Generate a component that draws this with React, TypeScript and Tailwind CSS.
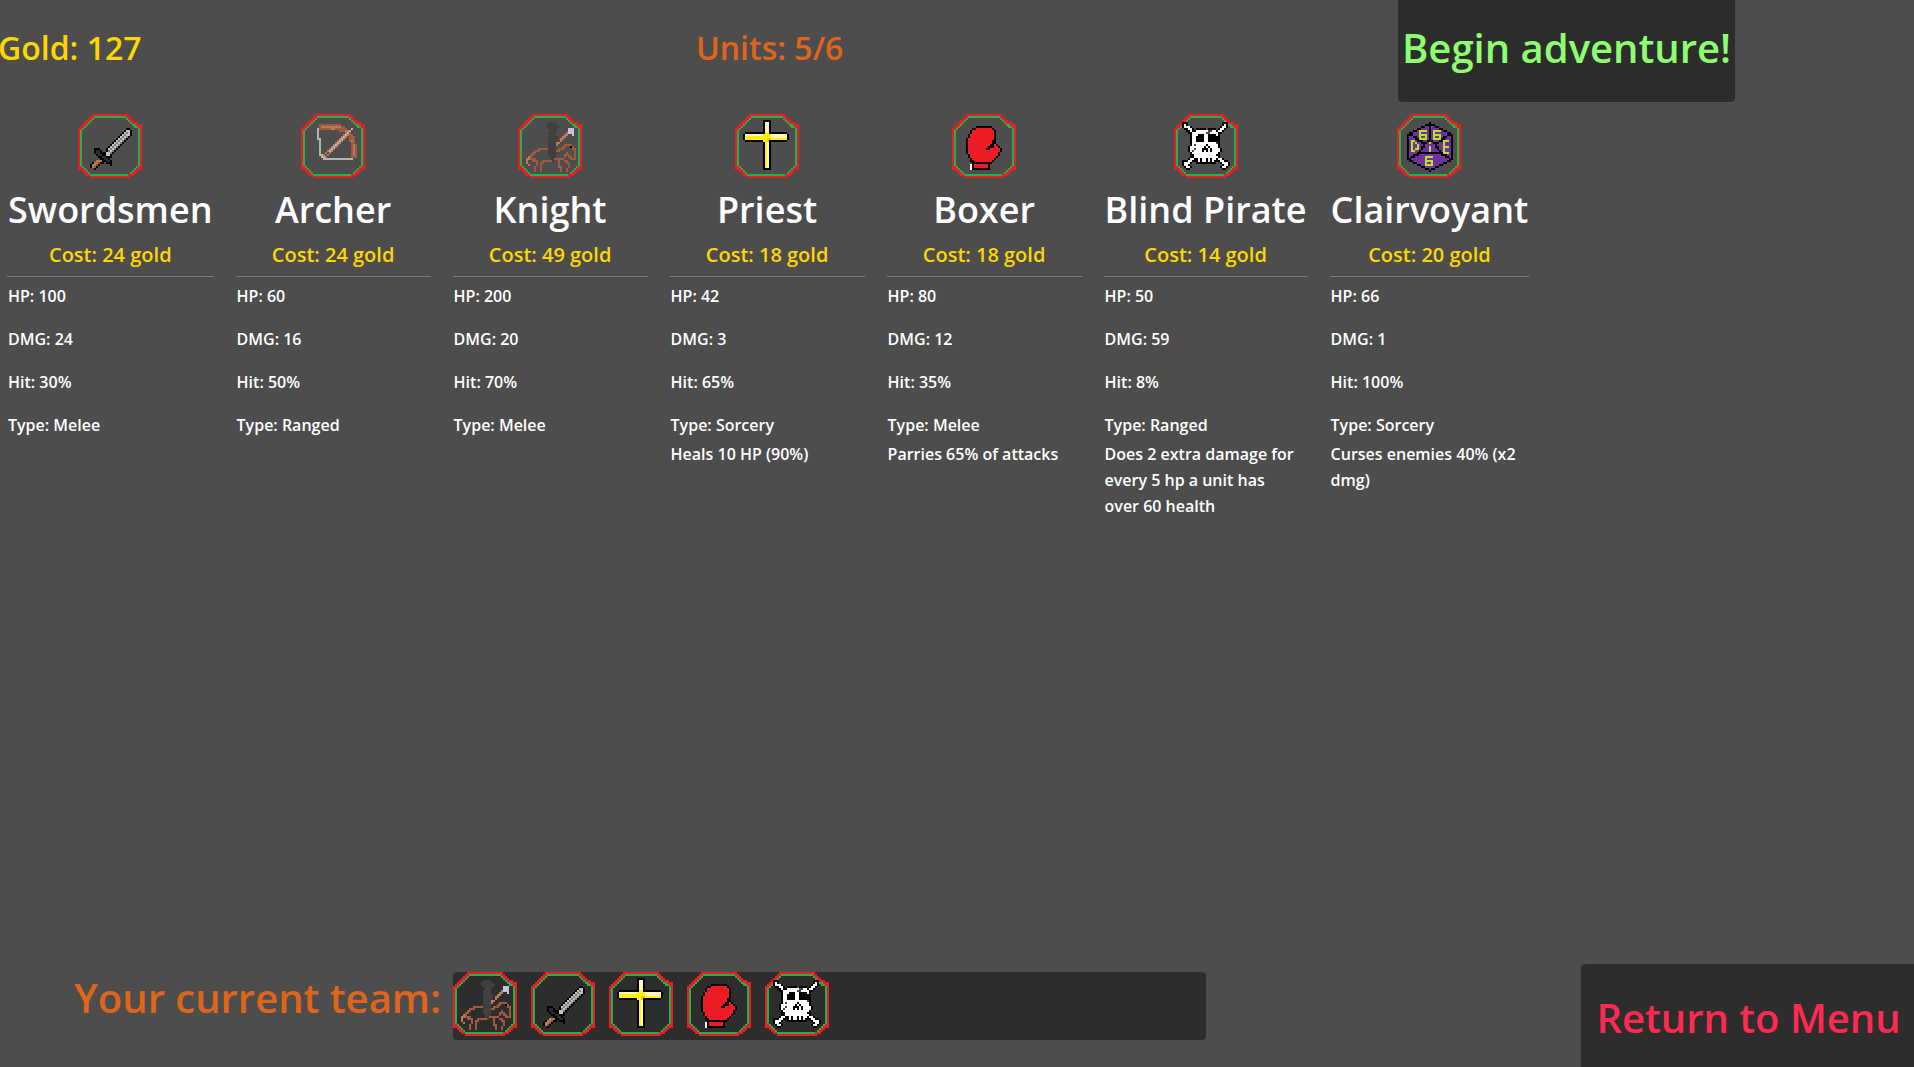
type Layer = [color: string, runs: string];

const FRAME: Layer[] = [
  [
    "#ed1c24",
    "0:7-24 1:6-7,24-25 2:5-6,25-26 3:4-5,26-27 4:3-4,27-29 5:2-3,29-31 6:1-2,30-31 7:0-1,31 8:0,31 9:0,31 10:0,31 11:0,31 12:0,31 13:0,31 14:0,31 15:0,31 16:0,31 17:0,31 18:0,31 19:0,31 20:0,31 21:0,31 22:0,31 23:0,31 24:0,31 25:0,31 26:0-1,30-31 27:0-2,29-31 28:2-3,28-29 29:3-4,27-28 30:4-5,25-27 31:6-25",
  ],
  [
    "#22b14c",
    "1:8-23 2:7,24 3:6,25 4:5,26 5:4,27-28 6:3,28-29 7:2,30 8:1,30 9:1,30 10:1,30 11:1,30 12:1,30 13:1,30 14:1,30 15:1,30 16:1,30 17:1,30 18:1,30 19:1,30 20:1,30 21:1,30 22:1,30 23:1,30 24:1,30 25:1,30 26:2,29 27:3,28 28:4,27 29:5,26 30:6-24",
  ],
];

const SPRITES: Record<string, Layer[]> = {
  sword: [
    [
      "#000000",
      "7:24-25 8:23,26 9:22,26 10:21,26 11:20,25 12:19,24 13:18,23 14:17,22 15:16,21 16:15,20 17:8-10,14,19 18:8,11,14,18 19:8,11-13,17 20:9,12-13,16 21:10-11,14-16 22:11-12,15 23:12-13,16 24:7,11-12,14-16 25:6,10,16 26:6,9 27:8",
    ],
    ["#c3c3c3", "8:24-25 9:23-25 10:22-25 11:21-24 12:20-23 13:19-22 14:18-21 15:17-20 16:16-19 17:15-18 18:15-17 19:14-16 20:14-15"],
    ["#7f7f7f", "9:24 10:23 11:22,24 12:21,23 13:20,22 14:19,21 15:18,20 16:17,19 17:16,18 18:15,17 19:16"],
    ["#2b2b2b", "18:9-10 19:9-10 20:10-11 21:12-13 22:13-14 23:14-15"],
    ["#b97a57", "23:9-11 24:8-10 25:7-9 26:7-8"],
    ["#8a553a", "24:10 25:9 26:8"],
  ],
  bow: [
    [
      "#a0593a",
      "5:9-19 6:9,20-21 7:9-14,17-22 8:19-24 9:22-24 10:23-25 11:24-26 12:24-26 13:24-26 14:25-26 15:25,27 16:25,27 17:25,27 18:25,27 19:25,27 20:25,27 21:25-27",
    ],
    [
      "#b97a57",
      "6:10-19 7:15-16 8:22-23 9:22-23 10:21,23 11:20,22 12:19,21 13:18,20,25 14:17,19 15:16,18,26 16:15,17,26 17:14,16,26 18:13,15,26 19:12,14,26 20:11,13,26 21:12",
    ],
    [
      "#b4b4b4",
      "7:8,25 8:8,24 9:8,23 10:8,22 11:8,21 12:8-9,20 13:9,19 14:9,18 15:9,17 16:9,16 17:9,15 18:9,14 19:9 20:9-10 21:10-11 22:11-25",
    ],
  ],
  knight: [
    [
      "#404040",
      "4:15-18 5:14-19 6:14-20 7:15-19 8:16-18 9:15-18 10:15-18 11:15-19 12:15-19 13:15-19 14:15-19 15:15-18 16:15-18 17:15-18 18:15-18 19:15-18 20:15-18 21:16-18 22:16-18 23:16-17",
    ],
    ["#c8bfe7", "7:25-27 8:25-27 9:25-27 10:27"],
    ["#b97a57", "9:24 10:23-24 11:22-23 12:21-22 13:21 14:19-20 15:19 21:5 22:4-5 23:4 24:4 25:5"],
    [
      "#a0593a",
      "15:23-26 16:22-23,27 17:10-14,20-22,27-28 18:8-10,19-20,28 19:7-8,24,28 20:6-7,23-25,28 21:6,23,25-26,28 22:6-8,18-22,26-28 23:7-9,12-16,20,23-24 24:9,11-12,20,24-25 25:9,11,20,25 26:8,11,20-21,25 27:8,11,21,24 28:8,11,21,24",
    ],
    ["#000000", "16:26"],
  ],
  cross: [
    [
      "#000000",
      "3:14-17 4:14,17 5:14,17 6:14,17 7:14,17 8:14,17 9:5-14,17-25 10:4,26 11:4,26 12:4,26 13:5-14,17-25 14:14,17 15:14,17 16:14,17 17:14,17 18:14,17 19:14,17 20:14,17 21:14,17 22:14,17 23:14,17 24:14,17 25:14,17 26:14,17 27:14-17",
    ],
    [
      "#fff6bf",
      "4:15-16 5:15-16 6:15-16 7:15-16 8:15-16 10:5-13,18-25 11:18-25 14:16 15:16 16:16 17:16 18:16 19:16 20:16 21:16 22:16 23:16 24:16 25:16 26:16",
    ],
    [
      "#fff200",
      "9:15-16 10:14-17 11:5-17 12:5-25 13:14-16 14:15 15:15 16:15 17:15 18:15 19:15 20:15 21:15 22:15 23:15 24:15 25:15 26:15",
    ],
    ["#e6cf00", "12:16-17 13:16"],
  ],
  glove: [
    [
      "#ed1c24",
      "7:12-19 8:10-20 9:10-20 10:9-20 11:9-20 12:8-20 13:8-20 14:8-20 15:8-21 16:8-22 17:8-23 18:8-23 19:8-23 20:9-22 21:9-21 22:10-20 23:11-19 25:11-17 26:11-17",
    ],
    [
      "#000000",
      "6:12-19 7:10-11,20 8:9,21 9:9,21 10:8,21 11:8,21 12:7,21 13:7,20-21 14:7,20-21 15:7,19-20,22 16:7,18-20,23 17:7,17-18,24 18:7,24 19:7,23 20:8,23 21:8,22 22:9,21 23:9-10,20 24:10-19 25:10,18 26:10,18 27:10-18",
    ],
    ["#ffffff", "25:9 26:9 27:9"],
  ],
  skull: [
    [
      "#000000",
      "4:4-6,24-26 5:4,6,24,26 6:4,8,23,26 7:5-6,9,11-15,17-20,22,25 8:6-7,9-10,21,24 9:7-8,22-23 10:8,12-14,17-20,22 11:8,11-14,17-21,22 12:8,11-14,17-21,22 13:8,11-14,17-21,22 14:8,22 15:8,16,22 16:7,15,17,22 17:7,14-16,18,23 18:7,14,16,18,23 19:8,22 20:8-9,21-22 21:8-9,22 22:7,10-11,13,16,18,21,24 23:4-6,9-11,13,16,18,20-22,25-26 24:4,8,11-20,23,27 25:4,7,24,27 26:5,8,23,26 27:6-7,24-25",
    ],
    [
      "#ffffff",
      "5:5,25 6:5-7,24-25 7:7-8,23-24 8:8,11-16,19-20,22-23 9:9-15,18-21 10:9-11,15-16,21 11:9-10,15-16 12:9-10,15-16 13:9-10,15-16 14:9-20 15:9,11-15,17-21 16:8-14,16,18-21 17:8-9,11-13,17,19-22 18:8-13,15,17,19-22 19:9-21 20:10-20 21:10-21 22:8-9,12,14-15,17,19-20,22-23 23:7-8,12,14-15,17,19,23-24 24:5-7,24-26 25:5-6,25-26 26:6-7,24-25",
    ],
    ["#4a4a4a", "7:16 8:17-18 9:16-17 14:21 15:10 17:10 18:9"],
  ],
  die: [
    [
      "#7030a0",
      "5:16 6:14-18 7:12-20 8:10-22 9:8-24 10:6-26 11:6-26 12:6-26 13:6-26 14:6-26 15:6-26 16:6-26 17:6-26 18:6-26 19:6-26 20:6-26 21:6-26 22:6-26 23:8-24 24:9-23 25:11-21 26:13-19 27:15-17",
    ],
    [
      "#000000",
      "4:16 5:14-18 6:12-13,16,19-20 7:10-11,16,21-22 8:8-9,16,23-24 9:6-7,16,25-26 10:5-7,16,25-27 11:5,8-9,16,23-24,27 12:5,9-10,16,22-23,27 13:5,10-12,15-17,21-22,27 14:5,12-13,14,18,19-20,27 15:5,13,19,27 16:5,12-13,19-20,27 17:5,12,20,27 18:5,11,21,27 19:5,10-22,27 20:5,8-10,22-24,27 21:5,7-8,24-25,27 22:5-6,26-27 23:6-7,25-26 24:8-9,23-24 25:10-11,21-22 26:12-13,19-20 27:14-15,17-18 28:16",
    ],
    [
      "#b5e61d",
      "8:11-14,18-21 9:11,18 10:11-14,18-21 11:11,14,18,21 12:11-14,18-21 13:7-8,23-25 14:7,9,16,23 15:7,10,23 16:7,10,16,23-25 17:7,9-10,16,23 18:7-8,16,23 19:23-25 21:14-17 22:14 23:14-17 24:14,17 25:14-17",
    ],
  ],
};

/** Turns "row:from-to,col ..." runs into one path of unit squares. */
function toPath(runs: string): string {
  return runs
    .split(" ")
    .flatMap((line) => {
      const [row, spans] = line.split(":");
      return spans.split(",").map((span) => {
        const [from, to = from] = span.split("-");
        const width = Number(to) - Number(from) + 1;
        return `M${from} ${row}h${width}v1h-${width}z`;
      });
    })
    .join("");
}

function Sprite({ name }: { name: string }) {
  return (
    <svg viewBox="0 0 32 32" shapeRendering="crispEdges" className="size-16" aria-hidden="true">
      {[...FRAME, ...SPRITES[name]].map(([color, runs], i) => (
        <path key={i} fill={color} d={toPath(runs)} />
      ))}
    </svg>
  );
}

interface Unit {
  name: string;
  sprite: string;
  cost: number;
  hp: number;
  dmg: number;
  hit: number;
  type: string;
  note?: string;
}

const UNITS: Unit[] = [
  { name: "Swordsmen", sprite: "sword", cost: 24, hp: 100, dmg: 24, hit: 30, type: "Melee" },
  { name: "Archer", sprite: "bow", cost: 24, hp: 60, dmg: 16, hit: 50, type: "Ranged" },
  { name: "Knight", sprite: "knight", cost: 49, hp: 200, dmg: 20, hit: 70, type: "Melee" },
  { name: "Priest", sprite: "cross", cost: 18, hp: 42, dmg: 3, hit: 65, type: "Sorcery", note: "Heals 10 HP (90%)" },
  { name: "Boxer", sprite: "glove", cost: 18, hp: 80, dmg: 12, hit: 35, type: "Melee", note: "Parries 65% of attacks" },
  {
    name: "Blind Pirate",
    sprite: "skull",
    cost: 14,
    hp: 50,
    dmg: 59,
    hit: 8,
    type: "Ranged",
    note: "Does 2 extra damage for every 5 hp a unit has over 60 health",
  },
  {
    name: "Clairvoyant",
    sprite: "die",
    cost: 20,
    hp: 66,
    dmg: 1,
    hit: 100,
    type: "Sorcery",
    note: "Curses enemies 40% (x2 dmg)",
  },
];

const TEAM = [
  { name: "Knight", sprite: "knight" },
  { name: "Swordsmen", sprite: "sword" },
  { name: "Priest", sprite: "cross" },
  { name: "Boxer", sprite: "glove" },
  { name: "Blind Pirate", sprite: "skull" },
];

function UnitCard({ unit }: { unit: Unit }) {
  return (
    <article className="flex min-w-[195px] flex-col">
      <button type="button" aria-label={`Recruit ${unit.name}`} className="self-center">
        <Sprite name={unit.sprite} />
      </button>
      <h2 className="mt-2 px-px text-center text-4xl/[48px] whitespace-nowrap">{unit.name}</h2>
      <p className="mt-1.5 text-center text-xl/[30px] text-[#ffd700]">Cost: {unit.cost} gold</p>
      <hr className="mt-1.5 border-[#7d7d7d]" />
      <ul className="flex flex-col gap-5 px-px pt-2">
        <li className="text-base/[23px]">HP: {unit.hp}</li>
        <li className="text-base/[23px]">DMG: {unit.dmg}</li>
        <li className="text-base/[23px]">Hit: {unit.hit}%</li>
        <li className="text-base/[23px]">Type: {unit.type}</li>
      </ul>
      {unit.note && <p className="mt-1 w-[195px] px-px text-base/[26px]">{unit.note}</p>}
    </article>
  );
}

export default function App() {
  return (
    <div className="flex min-h-screen flex-col overflow-hidden bg-[#4d4d4d] font-['Open_Sans',sans-serif] font-semibold text-white">
      <header className="grid grid-cols-[696fr_702fr_516fr] items-center">
        <p className="-ml-0.5 pb-1.5 text-[32px]/[44px] text-[#ffd700]">Gold: 127</p>
        <p className="pb-1.5 text-[32px]/[44px] text-[#e0651b]">Units: 5/6</p>
        <button
          type="button"
          className="h-[102px] justify-self-start rounded-b bg-[#2d2d2d] px-1 pb-1.5 text-[40px]/[56px] whitespace-nowrap text-[#8eff70]"
        >
          Begin adventure!
        </button>
      </header>

      <main className="flex flex-1 items-start gap-[22px] px-[7px] pt-3">
        {UNITS.map((unit) => (
          <UnitCard key={unit.name} unit={unit} />
        ))}
      </main>

      <footer className="flex items-start">
        <h2 className="mt-1.5 w-[453px] shrink-0 pr-3 text-right text-[40px]/[56px] whitespace-nowrap text-[#e0651b]">
          Your current team:
        </h2>
        <div className="mt-2 flex h-[68px] w-[753px] gap-3.5 rounded bg-[#2d2d2d]">
          {TEAM.map((member) => (
            <button key={member.name} type="button" aria-label={`Dismiss ${member.name}`} className="self-start">
              <Sprite name={member.sprite} />
            </button>
          ))}
        </div>
        <button
          type="button"
          className="ml-auto h-[103px] w-[333px] rounded-tl bg-[#2d2d2d] pt-1 pl-0.5 text-[40px]/[56px] whitespace-nowrap text-[#ff2a4f]"
        >
          Return to Menu
        </button>
      </footer>
    </div>
  );
}
